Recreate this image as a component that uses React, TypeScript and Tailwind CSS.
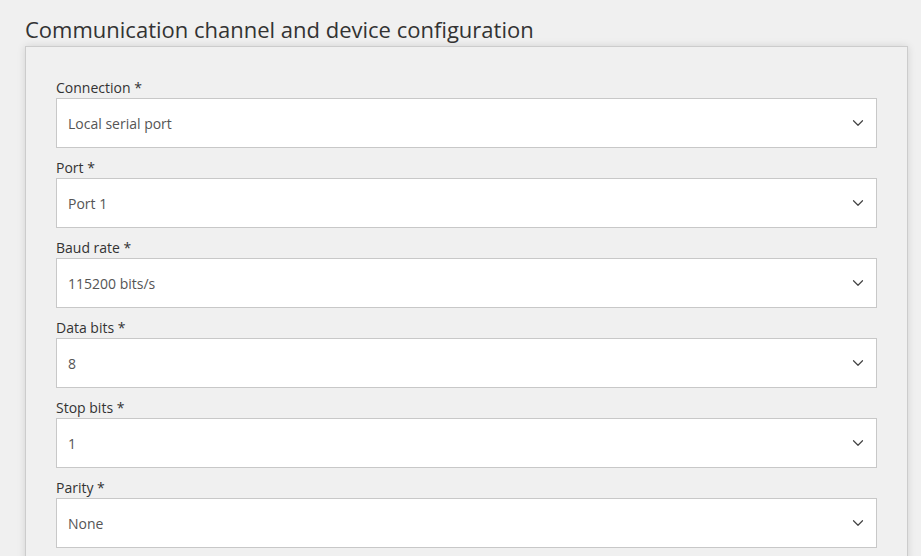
import { ChevronDown } from 'lucide-react';

type Field = { label: string; value: string };

const fields: Field[] = [
  { label: 'Connection *', value: 'Local serial port' },
  { label: 'Port *', value: 'Port 1' },
  { label: 'Baud rate *', value: '115200 bits/s' },
  { label: 'Data bits *', value: '8' },
  { label: 'Stop bits *', value: '1' },
  { label: 'Parity *', value: 'None' },
];

function SelectField({ label, value }: Field) {
  return (
    <div className="mb-[10px]">
      <label className="block text-[14px] leading-[20px] text-[#333]">{label}</label>
      <div className="h-[50px] bg-white border border-[#c8c8c8] flex items-center justify-between pl-[11px] pr-[9px]">
        <span className="text-[14px] text-[#555]">{value}</span>
        <ChevronDown size={18} strokeWidth={1.6} className="text-[#444]" />
      </div>
    </div>
  );
}

export default function App() {
  return (
    <div
      className="min-h-screen bg-[#f0f0f0] overflow-hidden"
      style={{ fontFamily: '"Open Sans", "Noto Sans", sans-serif' }}
    >
      <div className="pl-[25px] pr-[13px] pt-[13px]">
        <h1 className="text-[22px] leading-[32px] text-[#333] font-normal">
          Communication channel and device configuration
        </h1>
        <div className="mt-[1px] bg-[#f0f0f0] border border-[#cccccc] shadow-[0_0_8px_rgba(0,0,0,0.12)] px-[30px] pt-[31px] pb-[20px]">
          {fields.map((f) => (
            <SelectField key={f.label} {...f} />
          ))}
        </div>
      </div>
    </div>
  );
}
